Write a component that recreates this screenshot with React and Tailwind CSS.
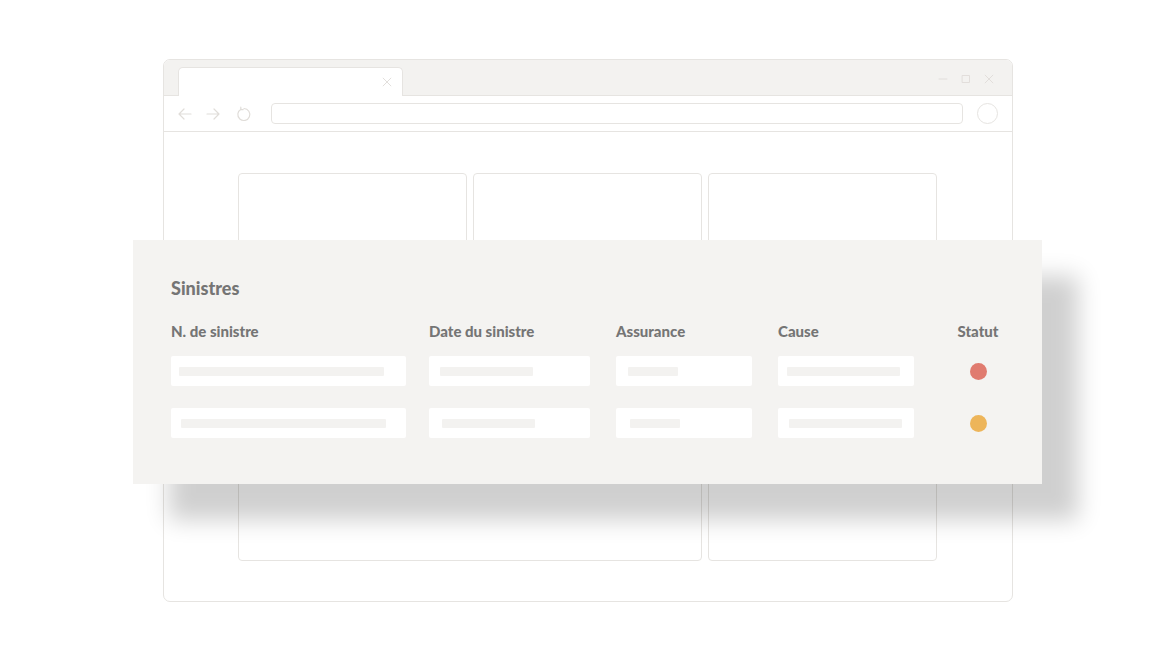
import React from "react";

const FONT = { fontFamily: "'Source Sans Pro', Lato, 'Open Sans', sans-serif" };

// placeholder cell: white box with a light bar inside
function Cell({ w, bar, offset }) {
  return (
    <div className="h-[30px] rounded-[2px] bg-white flex items-center" style={{ width: w, paddingLeft: offset }}>
      <div className="h-[9px] rounded-[1px] bg-[#f3f2f0]" style={{ width: bar }} />
    </div>
  );
}

const ROWS = [
  { dot: "#e07b6f", shift: 0 },
  { dot: "#edb55a", shift: 2 },
];

function Stroke({ children, size = 18 }) {
  return (
    <svg width={size} height={size} viewBox="0 0 18 18" fill="none" stroke="#e0ddd9" strokeWidth="1.2" strokeLinecap="round" strokeLinejoin="round">
      {children}
    </svg>
  );
}

export default function App() {
  return (
    <div className="relative w-[1176px] h-[660px] bg-white overflow-hidden" style={FONT}>
      {/* browser window */}
      <div className="absolute left-[163px] top-[59px] w-[850px] h-[543px] rounded-[7px] border border-[#e6e4e1] overflow-hidden flex flex-col bg-white">
        <div className="h-[36px] bg-[#f3f2f0] flex items-end pl-[14px] pr-[16px] border-b border-[#e6e4e1]">
          <div className="w-[225px] h-[29px] bg-white rounded-t-[5px] border border-b-0 border-[#e6e4e1] flex items-center justify-end pr-[8px] -mb-px">
            <Stroke size={14}>
              <path d="M4 4l10 10M14 4L4 14" />
            </Stroke>
          </div>
          <div className="flex-1" />
          <div className="flex items-center gap-[9px] self-center mb-[-2px]">
            <Stroke size={14}><path d="M4 9h10" /></Stroke>
            <Stroke size={14}><rect x="4.5" y="4.5" width="9" height="9" /></Stroke>
            <Stroke size={14}><path d="M4 4l10 10M14 4L4 14" /></Stroke>
          </div>
        </div>
        <div className="h-[36px] flex items-center pl-[12px] pr-[14px] border-b border-[#e6e4e1]">
          <Stroke>
            <path d="M15 9H3M8 4L3 9l5 5" />
          </Stroke>
          <div className="w-[10px]" />
          <Stroke>
            <path d="M3 9h12M10 4l5 5-5 5" />
          </Stroke>
          <div className="w-[13px]" />
          <Stroke>
            <path d="M6 4.2A6 6 0 1 0 9 3.5" />
            <path d="M5.8 2.2v2.4h2.4" />
          </Stroke>
          <div className="w-[18px]" />
          <div className="flex-1 h-[21px] rounded-[4px] border border-[#e6e4e1]" />
          <div className="w-[14px]" />
          <div className="w-[21px] h-[21px] rounded-full border border-[#e6e4e1]" />
        </div>
        <div className="flex-1 pt-[41px] pl-[74px] flex flex-col gap-[6px]">
          <div className="flex gap-[6px]">
            <div className="w-[229px] h-[160px] rounded-[4px] border border-[#e6e4e1]" />
            <div className="w-[229px] h-[160px] rounded-[4px] border border-[#e6e4e1]" />
            <div className="w-[229px] h-[160px] rounded-[4px] border border-[#e6e4e1]" />
          </div>
          <div className="flex gap-[6px]">
            <div className="w-[464px] h-[222px] rounded-[4px] border border-[#e6e4e1]" />
            <div className="w-[229px] h-[222px] rounded-[4px] border border-[#e6e4e1]" />
          </div>
        </div>
      </div>

      {/* claims panel over the window */}
      <div className="absolute left-[133px] top-[240px] w-[909px] h-[244px] bg-[#f4f3f1] shadow-[36px_36px_22px_rgba(0,0,0,0.19)] pl-[38px] pt-[36px] text-[#757575]">
        <div className="text-[18px] font-black leading-[24px]">Sinistres</div>
        <div className="mt-[21px] flex items-center text-[15px] font-black leading-[20px]">
          <div className="w-[258px]">N. de sinistre</div>
          <div className="w-[187px]">Date du sinistre</div>
          <div className="w-[162px]">Assurance</div>
          <div className="w-[170px]">Cause</div>
          <div className="w-[60px] text-center">Statut</div>
        </div>
        <div className="mt-[15px] flex flex-col gap-[22px]">
          {ROWS.map((r, i) => (
            <div key={i} className="flex items-center">
              <div className="w-[258px]"><Cell w={235} bar={205} offset={8 + r.shift} /></div>
              <div className="w-[187px]"><Cell w={161} bar={93} offset={11 + r.shift} /></div>
              <div className="w-[162px]"><Cell w={136} bar={50} offset={12 + r.shift} /></div>
              <div className="w-[170px]"><Cell w={136} bar={113} offset={9 + r.shift} /></div>
              <div className="w-[60px] flex justify-center">
                <div className="w-[17px] h-[17px] rounded-full" style={{ background: r.dot }} />
              </div>
            </div>
          ))}
        </div>
      </div>
    </div>
  );
}
